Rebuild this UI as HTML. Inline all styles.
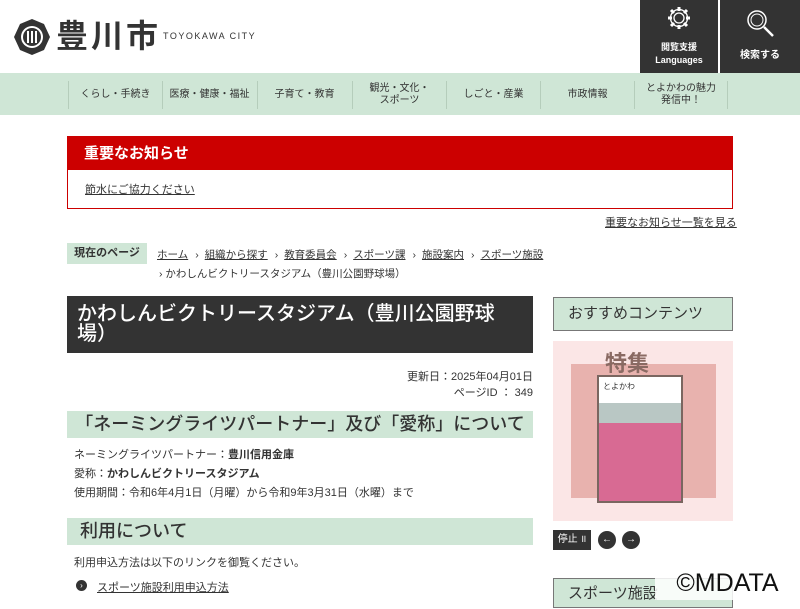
<!DOCTYPE html><html><head><meta charset="utf-8"><style>
*{margin:0;padding:0;box-sizing:border-box}
body{width:800px;height:600px;overflow:hidden;background:#fff;font-family:"Liberation Sans","Noto Sans CJK JP",sans-serif;color:#333;position:relative}
.a{position:absolute}
.nav{left:0;top:73px;width:800px;height:42px;background:#cfe6d6}
.ni{position:absolute;top:8px;height:28px;width:94px;border-left:1px solid #b5cdbb;font-size:10px;color:#333;display:flex;align-items:center;justify-content:center;text-align:center;line-height:12px}
.u{text-decoration:underline}
.bc{font-size:10.5px;color:#333}
.s{padding:0 6px 0 7px}
</style></head><body>
<svg class="a" style="left:13px;top:18px" width="38" height="38" viewBox="0 0 38 38"><polygon points="19,1 31,6 37,19 31,32 19,37 7,32 1,19 7,6" fill="#333"/><circle cx="19" cy="19" r="11" fill="#fff"/><circle cx="19" cy="19" r="9" fill="#333"/><rect x="14" y="13" width="2" height="12" fill="#fff"/><rect x="18" y="13" width="2" height="12" fill="#fff"/><rect x="22" y="13" width="2" height="12" fill="#fff"/></svg>
<div class="a" style="left:56px;top:16px;font-size:32px;font-weight:bold;color:#333;letter-spacing:3px;line-height:40px">豊川市</div>
<div class="a" style="left:163px;top:31px;font-size:9px;letter-spacing:1.5px;color:#333">TOYOKAWA CITY</div>
<div class="a" style="left:640px;top:0;width:78px;height:73px;background:#333;color:#fff;font-size:9px;text-align:center;font-weight:bold">
<svg style="margin-top:5px" width="26" height="26" viewBox="0 0 26 26"><circle cx="13" cy="13" r="5" fill="none" stroke="#fff" stroke-width="1.3"/><path d="M13 2v4M13 20v4M2 13h4M20 13h4M5 5l3 3M18 18l3 3M5 21l3-3M18 8l3-3" stroke="#fff" stroke-width="3"/><circle cx="13" cy="13" r="8.5" fill="none" stroke="#fff" stroke-width="1.3"/></svg>
<div style="line-height:13px;margin-top:8px">閲覧支援<br>Languages</div></div>
<div class="a" style="left:720px;top:0;width:80px;height:73px;background:#333;color:#fff;font-size:10px;text-align:center;font-weight:bold">
<svg style="margin-top:8px" width="30" height="30" viewBox="0 0 30 30"><circle cx="12" cy="12" r="9" fill="none" stroke="#fff" stroke-width="1.5"/><circle cx="12" cy="12" r="6" fill="none" stroke="#fff" stroke-width="1"/><path d="M19 19l9 9" stroke="#fff" stroke-width="2.5"/></svg>
<div style="margin-top:5px">検索する</div></div>
<div class="a nav">
<div class="ni" style="left:68px">くらし・手続き</div>
<div class="ni" style="left:162px">医療・健康・福祉</div>
<div class="ni" style="left:257px">子育て・教育</div>
<div class="ni" style="left:352px">観光・文化・<br>スポーツ</div>
<div class="ni" style="left:446px">しごと・産業</div>
<div class="ni" style="left:540px">市政情報</div>
<div class="ni" style="left:634px;border-right:1px solid #b5cdbb">とよかわの魅力<br>発信中！</div>
</div>
<div class="a" style="left:67px;top:136px;width:666px;height:73px;border:1px solid #c00">
<div style="background:#c00;color:#fff;font-size:15px;font-weight:bold;height:33px;line-height:33px;padding-left:16px">重要なお知らせ</div>
<div class="u" style="font-size:11px;margin:11px 0 0 17px">節水にご協力ください</div></div>
<div class="a u" style="left:605px;top:214px;font-size:11px">重要なお知らせ一覧を見る</div>
<div class="a" style="left:67px;top:243px;width:80px;height:21px;background:#cfe6d6;font-size:11px;line-height:21px;text-align:center;font-weight:bold">現在のページ</div>
<div class="a bc" style="left:157px;top:247px;white-space:nowrap"><span class="u">ホーム</span><span class="s">›</span><span class="u">組織から探す</span><span class="s">›</span><span class="u">教育委員会</span><span class="s">›</span><span class="u">スポーツ課</span><span class="s">›</span><span class="u">施設案内</span><span class="s">›</span><span class="u">スポーツ施設</span></div>
<div class="a bc" style="left:159px;top:266px">› かわしんビクトリースタジアム（豊川公園野球場）</div>
<div class="a" style="left:67px;top:296px;width:466px;height:57px;background:#333;color:#fff;font-size:20px;line-height:20px;padding:8px 10px;font-weight:500">かわしんビクトリースタジアム（豊川公園野球場）</div>
<div class="a" style="left:400px;top:369px;width:133px;text-align:right;font-size:11px;line-height:16px">更新日：2025年04月01日<br>ページID ： 349</div>
<div class="a" style="left:67px;top:411px;width:466px;height:27px;background:#cfe6d6;font-size:18px;line-height:27px;text-align:center;font-weight:500">「ネーミングライツパートナー」及び「愛称」について</div>
<div class="a" style="left:74px;top:446px;font-size:11px;line-height:19px">ネーミングライツパートナー：<b>豊川信用金庫</b><br>愛称：<b>かわしんビクトリースタジアム</b><br>使用期間：令和6年4月1日（月曜）から令和9年3月31日（水曜）まで</div>
<div class="a" style="left:67px;top:518px;width:466px;height:27px;background:#cfe6d6;font-size:18px;line-height:27px;padding-left:13px;font-weight:500">利用について</div>
<div class="a" style="left:74px;top:554px;font-size:11px">利用申込方法は以下のリンクを御覧ください。</div>
<div class="a" style="left:76px;top:580px;width:11px;height:11px;border-radius:50%;background:#333;color:#fff;font-size:8px;line-height:11px;text-align:center">›</div>
<div class="a u" style="left:97px;top:579px;font-size:11px">スポーツ施設利用申込方法</div>
<div class="a" style="left:553px;top:297px;width:180px;height:34px;background:#cfe6d6;border:1px solid #777;font-size:15px;line-height:32px;padding-left:14px">おすすめコンテンツ</div>
<div class="a" style="left:553px;top:341px;width:180px;height:180px;background:#fbe6e6"></div>
<div class="a" style="left:571px;top:364px;width:145px;height:134px;background:#e8b2ae"></div>
<div class="a" style="left:605px;top:346px;font-size:22px;font-weight:bold;color:#8a6a63">特集</div>
<div class="a" style="left:597px;top:375px;width:86px;height:128px;background:#d86a93;border:2px solid #7a6660"><div style="height:26px;background:#fff;font-size:8px;padding:4px">とよかわ</div><div style="height:20px;background:#b9c7c4"></div></div>
<div class="a" style="left:553px;top:530px;width:38px;height:20px;background:#333;color:#fff;font-size:10px;line-height:20px;text-align:center">停止 ॥</div>
<div class="a" style="left:598px;top:531px;width:18px;height:18px;border-radius:50%;background:#333;color:#fff;font-size:10px;line-height:18px;text-align:center">←</div>
<div class="a" style="left:622px;top:531px;width:18px;height:18px;border-radius:50%;background:#333;color:#fff;font-size:10px;line-height:18px;text-align:center">→</div>
<div class="a" style="left:553px;top:578px;width:180px;height:30px;background:#cfe6d6;border:1px solid #777;font-size:15px;line-height:30px;padding-left:14px">スポーツ施設</div>
<div class="a" style="left:655px;top:567px;width:145px;height:33px;background:rgba(255,255,255,.85);font-size:25px;line-height:33px;text-align:center;color:#111">©MDATA</div>
</body></html>
